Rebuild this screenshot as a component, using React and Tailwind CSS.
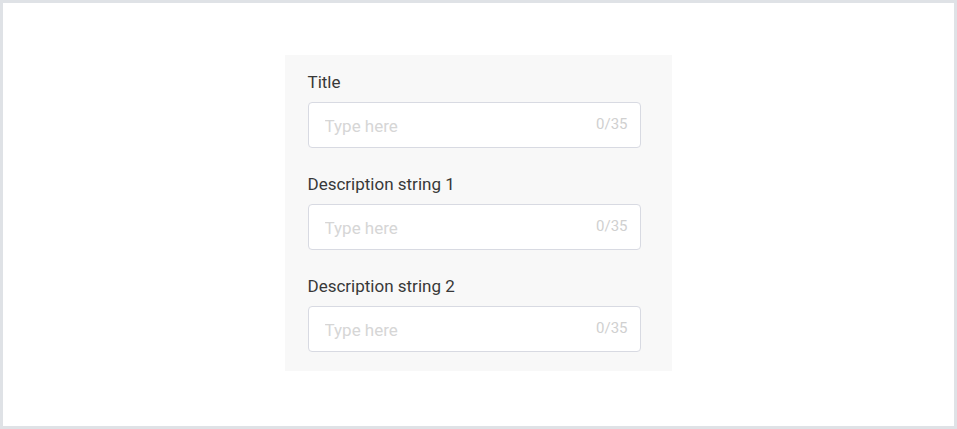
import React from 'react';

const fields = ['Title', 'Description string 1', 'Description string 2'];

const Field = ({ label }) => (
  <div className="flex flex-col">
    <label className="pt-px text-[17px] leading-5 text-[#383838]">{label}</label>
    <div className="mt-[10px] flex h-[46px] w-[333px] items-center rounded-[4px] border border-[#d8dae2] bg-white pl-4 pr-3">
      <input
        type="text"
        placeholder="Type here"
        className="min-w-0 flex-1 bg-transparent pt-[3px] text-[17px] text-[#333333] outline-none placeholder:text-[#d6d6d6]"
      />
      <span className="mb-[2px] text-[15px] text-[#d0d0d0]">0/35</span>
    </div>
  </div>
);

export default function App() {
  return (
    <div
      className="flex h-[429px] w-[957px] items-start justify-center border-[3px] border-[#dfe2e6] bg-white pt-[52px]"
      style={{ fontFamily: 'Roboto, "Liberation Sans", sans-serif' }}
    >
      <div className="ml-[-1px] flex w-[387px] flex-col gap-[25px] bg-[#f8f8f8] pb-[19px] pl-[23px] pt-4">
        {fields.map((f) => (
          <Field key={f} label={f} />
        ))}
      </div>
    </div>
  );
}
